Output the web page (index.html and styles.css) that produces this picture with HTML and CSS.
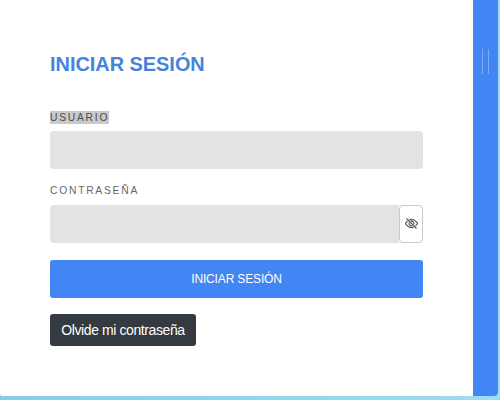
FILE: index.html
```html
<!DOCTYPE html>
<html lang="es">
<head>
<meta charset="utf-8">
<title>Iniciar sesión</title>
<link rel="stylesheet" href="styles.css">
</head>
<body>
<div class="shell">
  <div class="frame">
    <main class="card">
      <h1 class="title">INICIAR SESIÓN</h1>
      <form class="form">
        <div class="label-row label-row-first"><label class="label label-selected" for="u">USUARIO</label></div>
        <input class="field" id="u" type="text">
        <div class="label-row label-row-second"><label class="label" for="p">CONTRASEÑA</label></div>
        <div class="password">
          <input class="field field-grow" id="p" type="password">
          <button class="toggle" type="button" aria-label="Mostrar contraseña">
            <svg class="eye" viewBox="0 0 16 16" width="13" height="13">
              <path d="M13.359 11.238C15.06 9.72 16 8 16 8s-3-5.5-8-5.5a7.028 7.028 0 0 0-2.79.588l.77.771A5.944 5.944 0 0 1 8 3.5c2.12 0 3.879 1.168 5.168 2.457A13.134 13.134 0 0 1 14.828 8c-.058.087-.122.183-.195.288-.335.48-.83 1.12-1.465 1.755-.165.165-.337.328-.517.486l.708.709z"/>
              <path d="M11.297 9.176a3.5 3.5 0 0 0-4.474-4.474l.823.823a2.5 2.5 0 0 1 2.829 2.829l.822.822zm-2.943 1.299.822.822a3.5 3.5 0 0 1-4.474-4.474l.823.823a2.5 2.5 0 0 0 2.829 2.829z"/>
              <path d="M3.35 5.47c-.18.16-.353.322-.518.487A13.134 13.134 0 0 0 1.172 8l.195.288c.335.48.83 1.12 1.465 1.755C4.121 11.332 5.881 12.5 8 12.5c.716 0 1.39-.133 2.02-.36l.77.772A7.029 7.029 0 0 1 8 13.5C3 13.5 0 8 0 8s.939-1.721 2.641-3.238l.708.709zm10.296 8.884-12-12 .708-.708 12 12-.708.708z"/>
            </svg>
          </button>
        </div>
        <button class="submit" type="button">INICIAR SESIÓN</button>
        <button class="forgot" type="button">Olvide mi contraseña</button>
      </form>
    </main>
    <aside class="panel"><span class="grip"></span><span class="grip"></span></aside>
  </div>
</div>
</body>
</html>
```
FILE: styles.css
```css
html, body {
  margin: 0;
  height: 100%;
  overflow: hidden;
}
body {
  font-family: "Liberation Sans", Arial, sans-serif;
  background: #8fd6ec;
}
.shell {
  height: 400px;
  width: 500px;
  display: flex;
  flex-direction: column;
  box-sizing: border-box;
  padding: 0 2px 4px 0;
  background: linear-gradient(90deg, #84cfe8 0%, #9fdcf0 100%);
}
.frame {
  flex: 1;
  display: flex;
  background: #fff;
  border-bottom-left-radius: 3px;
  border-bottom-right-radius: 4px;
  overflow: hidden;
}
.card {
  flex: 1;
  background: #fff;
  padding: 53px 50px 0;
  box-sizing: border-box;
}
.title {
  margin: 0;
  font-size: 19.9px;
  line-height: 23px;
  font-weight: 700;
  color: #4583dc;
}
.form {
  display: flex;
  flex-direction: column;
  align-items: flex-start;
  margin-top: 34px;
}
.label-row {
  height: 14px;
  line-height: 14px;
  display: flex;
  align-items: center;
}
.label-row-first {
  margin-bottom: 7px;
}
.label-row-second {
  margin-top: 14px;
  margin-bottom: 8px;
}
.label {
  font-size: 10.3px;
  line-height: 13px;
  letter-spacing: 1.75px;
  color: #666;
}
.label-selected {
  background: #c9c9c9;
  color: #4a4a4a;
}
.field {
  display: block;
  width: 100%;
  height: 38px;
  box-sizing: border-box;
  border: 0;
  border-radius: 4px;
  background: #e3e3e3;
  padding: 0 12px;
  margin: 0;
}
.password {
  display: flex;
  width: 100%;
  height: 38px;
  margin-bottom: 17px;
}
.field-grow {
  flex: 1;
  width: auto;
  min-width: 0;
  border-radius: 4px 0 0 4px;
}
.toggle {
  width: 24px;
  height: 38px;
  box-sizing: border-box;
  border: 1px solid #c8c8c8;
  border-radius: 4px;
  background: #fff;
  padding: 0;
  display: flex;
  align-items: center;
  justify-content: center;
}
.eye {
  fill: #444;
  stroke: #444;
  stroke-width: 0.35;
  margin-top: -1px;
}
.submit {
  width: 100%;
  height: 38px;
  border: 0;
  border-radius: 3px;
  background: #4285f4;
  color: #fff;
  font: 12px "Liberation Sans", Arial, sans-serif;
  letter-spacing: -0.15px;
  margin-bottom: 16px;
  padding: 0;
}
.forgot {
  width: 146px;
  height: 32px;
  border: 0;
  border-radius: 3px;
  background: #343a40;
  color: #fff;
  font: 14px "Liberation Sans", Arial, sans-serif;
  letter-spacing: -0.4px;
  padding: 0;
}
.panel {
  width: 25px;
  background: #4285f4;
  display: flex;
  justify-content: center;
  align-items: flex-start;
  gap: 5px;
  padding-top: 49px;
  box-sizing: border-box;
}
.grip {
  width: 1px;
  height: 25px;
  background: #7eaaf6;
}
```
